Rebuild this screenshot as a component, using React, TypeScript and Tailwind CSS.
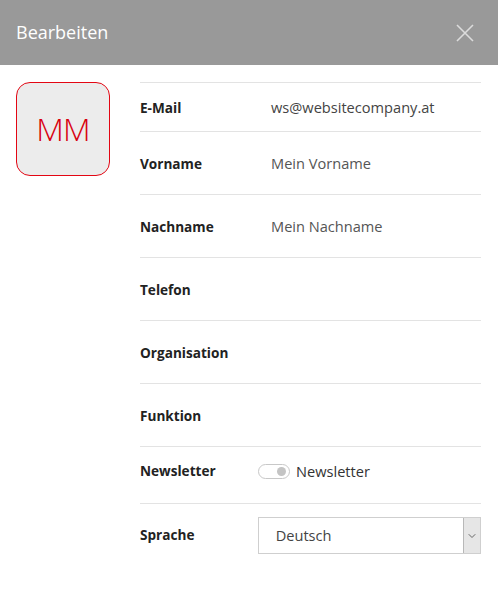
import { ChevronDown } from 'lucide-react';

const rows = [
  { label: 'Telefon' },
  { label: 'Organisation' },
  { label: 'Funktion' },
];

export default function App() {
  return (
    <div className="w-[498px] h-[598px] bg-white font-['Open_Sans',sans-serif] text-[#222]">
      <div className="h-[65px] bg-[#999999] flex items-center justify-between pl-4 pr-6">
        <h1 className="text-[18px] text-white">Bearbeiten</h1>
        <svg width="18" height="18" viewBox="0 0 18 18" className="mt-px">
          <path d="M1 1L17 17M17 1L1 17" stroke="#dcdcdc" strokeWidth="1.6" />
        </svg>
      </div>

      <div className="flex pt-[17px]">
        <div className="w-[140px] pl-4">
          <div className="w-[94px] h-[94px] rounded-[14px] border border-[#e30613] bg-[#ececec] flex items-center justify-center">
            <span className="text-[32px] font-light text-[#d8000f] tracking-tight">MM</span>
          </div>
        </div>

        <div className="w-[341px]">
          <div className="border-t border-[#e3e3e3] h-[49px] flex items-center pt-[2px]">
            <span className="w-[131px] text-[13.6px] font-bold">E-Mail</span>
            <span className="text-[14.6px] text-[#444]">ws@websitecompany.at</span>
          </div>
          <div className="border-t border-[#e3e3e3] h-[63px] flex items-center pt-[2px]">
            <span className="w-[131px] text-[13.6px] font-bold">Vorname</span>
            <span className="text-[14.6px] text-[#555]">Mein Vorname</span>
          </div>
          <div className="border-t border-[#e3e3e3] h-[63px] flex items-center pt-[2px]">
            <span className="w-[131px] text-[13.6px] font-bold">Nachname</span>
            <span className="text-[14.6px] text-[#555]">Mein Nachname</span>
          </div>
          {rows.map((r) => (
            <div key={r.label} className="border-t border-[#e3e3e3] h-[63px] flex items-center pt-[2px]">
              <span className="w-[131px] text-[13.6px] font-bold">{r.label}</span>
            </div>
          ))}
          <div className="border-t border-[#e3e3e3] h-[57px] flex items-center pb-[7px]">
            <span className="w-[118px] text-[13.6px] font-bold">Newsletter</span>
            <div className="w-[32px] h-[15px] rounded-full border border-[#c8c8c8] bg-white flex items-center justify-end pr-[3px]">
              <div className="w-[9px] h-[9px] rounded-full bg-[#c4c4c4]" />
            </div>
            <span className="ml-[6px] text-[14.6px] text-[#333]">Newsletter</span>
          </div>
          <div className="border-t border-[#e3e3e3] h-[64px] flex items-center">
            <span className="w-[118px] text-[13.6px] font-bold">Sprache</span>
            <div className="w-[224px] h-[37px] border border-[#cfcfcf] flex items-stretch">
              <span className="flex-1 flex items-center pl-[17px] text-[14.6px] text-[#444]">Deutsch</span>
              <div className="w-[17px] bg-[#e6e6e6] border-l border-[#b8b8b8] flex items-center justify-center">
                <ChevronDown size={12} color="#666" strokeWidth={2} />
              </div>
            </div>
          </div>
        </div>
      </div>
    </div>
  );
}
